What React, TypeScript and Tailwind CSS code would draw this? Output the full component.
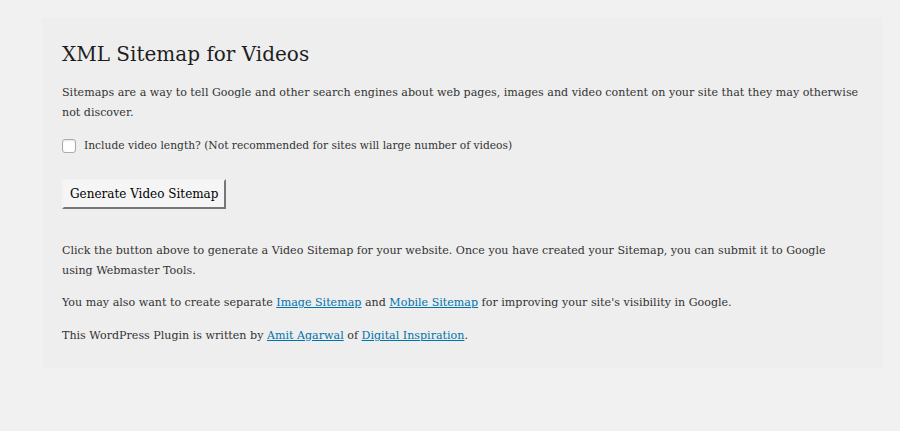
export default function App() {
  const font = { fontFamily: '"DejaVu Serif", Georgia, serif' };
  return (
    <div className="min-h-[431px] w-[900px] bg-[#f1f1f1] pt-[18px]" style={font}>
      <div className="ml-[42px] w-[840px] bg-[#eeeeee] px-5 pt-[22px] pb-[22px] text-[11.1px] leading-5 text-[#333]">
        <h2 className="text-[20px] leading-7 text-[#1e1e1e]">XML Sitemap for Videos</h2>
        <p className="mt-[15px]">
          Sitemaps are a way to tell Google and other search engines about web pages, images and video content on your site that they may otherwise not discover.
        </p>
        <label className="mt-[13px] flex items-center gap-[8px]">
          <span className="h-[14px] w-[14px] rounded-[3px] border border-[#aaa] bg-white shadow-[inset_0_1px_2px_rgba(0,0,0,0.1)]" />
          <span className="text-[10.7px]">Include video length? (Not recommended for sites will large number of videos)</span>
        </label>
        <div className="mt-[23px]">
          <button className="h-[30px] border-2 border-[#f4f4f4] border-r-[#777] border-b-[#777] bg-[#f5f5f5] px-[6px] text-[12px] text-black" style={font}>
            Generate Video Sitemap
          </button>
        </div>
        <p className="mt-[32px] max-w-[785px]">
          Click the button above to generate a Video Sitemap for your website. Once you have created your Sitemap, you can submit it to Google using Webmaster Tools.
        </p>
        <p className="mt-[12px]">
          You may also want to create separate <a className="text-[#0073aa] underline" href="#">Image Sitemap</a> and <a className="text-[#0073aa] underline" href="#">Mobile Sitemap</a> for improving your site's visibility in Google.
        </p>
        <p className="mt-[13px]">
          This WordPress Plugin is written by <a className="text-[#0073aa] underline" href="#">Amit Agarwal</a> of <a className="text-[#0073aa] underline" href="#">Digital Inspiration</a>.
        </p>
      </div>
    </div>
  );
}
